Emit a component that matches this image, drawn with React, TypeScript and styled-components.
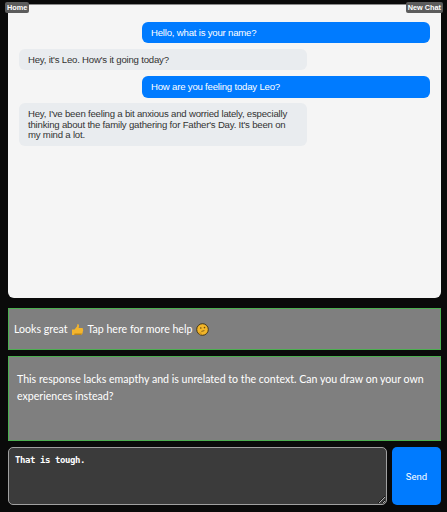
import { FC } from "react";
import styled, { createGlobalStyle } from "styled-components";

const GlobalStyle = createGlobalStyle`
  html, body {
    margin: 0;
    padding: 0;
    background: #0a0a0a;
  }
`;

const Page = styled.div`
  position: relative;
  box-sizing: border-box;
  width: 447px;
  height: 512px;
  padding: 4px 6px 7px 8px;
  display: flex;
  flex-direction: column;
  overflow: hidden;
`;

const NavButton = styled.button<{ $side: "left" | "right" }>`
  position: absolute;
  top: 2px;
  ${({ $side }) => ($side === "left" ? "left: 5px;" : "right: 4px;")}
  height: 11px;
  padding: 0 2px;
  border: 0;
  border-radius: 2px;
  background: #5c5c5c;
  color: #fff;
  font: bold 7.3px "Liberation Sans", Arial, sans-serif;
  line-height: 11px;
`;

const ChatPanel = styled.div`
  box-sizing: border-box;
  height: 294px;
  padding: 16.7px 11px 0;
  background: #f5f5f5;
  border-top: 1px solid #8a8a8a;
  border-radius: 0 0 6px 6px;
  display: flex;
  flex-direction: column;
  gap: 5.67px;
`;

const Bubble = styled.div<{ $user?: boolean }>`
  box-sizing: border-box;
  width: 288px;
  padding: 6px 9px 5px;
  border-radius: 6px;
  align-self: ${({ $user }) => ($user ? "flex-end" : "flex-start")};
  background: ${({ $user }) => ($user ? "#007bff" : "#e9ecef")};
  color: ${({ $user }) => ($user ? "#fff" : "#333")};
  font: 9.6px/10.5px "Liberation Sans", Arial, sans-serif;
  letter-spacing: -0.2px;
`;

const Notice = styled.div<{ $tall?: boolean }>`
  box-sizing: border-box;
  height: ${({ $tall }) => ($tall ? "85px" : "42px")};
  margin-top: ${({ $tall }) => ($tall ? "6px" : "10px")};
  padding: ${({ $tall }) => ($tall ? "14px 8px 0" : "0 5px")};
  display: ${({ $tall }) => ($tall ? "block" : "flex")};
  align-items: center;
  gap: 3.5px;
  background: #7f7f7f;
  border: 1px solid #4caf50;
  color: #fff;
  font: 10.6px/16.5px "Lato", "Noto Sans", sans-serif;
`;

const Composer = styled.div`
  margin-top: 6px;
  height: 58px;
  display: flex;
  gap: 5px;
`;

const Input = styled.textarea`
  box-sizing: border-box;
  flex: 1;
  min-width: 0;
  height: 58px;
  padding: 6px 6px;
  background: #3b3b3b;
  border: 1px solid #a0a0a0;
  border-radius: 5px;
  color: #fff;
  font: 600 9px/13px "DejaVu Sans Mono", monospace;
  letter-spacing: -0.42px;
  outline: none;
`;

const SendButton = styled.button`
  width: 49px;
  height: 58px;
  border: 0;
  border-radius: 5px;
  background: #007bff;
  color: #fff;
  font: 400 9.5px "Roboto", sans-serif;
`;

const ThumbsUp: FC = () => (
  <svg width="13" height="13" viewBox="0 0 13 13">
    <path
      d="M1 6.5h2.5V12H1zM3.5 6.5 6 3.5 6.5 1c1.3 0 1.8 1.2 1.4 2.6L7.6 5H11c1 0 1.3 1 .9 1.6.5.5.4 1.3-.1 1.7.3.6.1 1.3-.4 1.6.2.8-.2 1.6-1.2 1.6H6c-1 0-1.6-.4-2.5-.6z"
      fill="#f3b52c"
    />
    <path d="M3.5 12H10l1-1.6H3.5z" fill="#b9851c" />
  </svg>
);

const ThinkingFace: FC = () => (
  <svg width="13" height="13" viewBox="0 0 13 13">
    <circle cx="6.5" cy="6.5" r="5.8" fill="#f2b62a" stroke="#3a2c10" strokeWidth="0.9" />
    <circle cx="4.8" cy="5" r="0.8" fill="#6b4a10" />
    <circle cx="8.5" cy="4.6" r="0.8" fill="#6b4a10" />
    <path d="M5.4 8.4 8.4 7.6" fill="none" stroke="#6b4a10" strokeWidth="0.8" />
    <path d="M2.8 9.6c1-.6 2-.5 3 .2L5 11.6H3.5z" fill="#d99a1e" />
  </svg>
);

const App: FC = () => {
  return (
    <Page>
      <GlobalStyle />
      <NavButton $side="left">Home</NavButton>
      <NavButton $side="right">New Chat</NavButton>
      <ChatPanel>
        <Bubble $user>Hello, what is your name?</Bubble>
        <Bubble>Hey, it's Leo. How's it going today?</Bubble>
        <Bubble $user>How are you feeling today Leo?</Bubble>
        <Bubble>
          Hey, I've been feeling a bit anxious and worried lately, especially thinking about the
          family gathering for Father's Day. It's been on my mind a lot.
        </Bubble>
      </ChatPanel>
      <Notice>
        Looks great <ThumbsUp /> Tap here for more help <ThinkingFace />
      </Notice>
      <Notice $tall>
        This response lacks emapthy and is unrelated to the context. Can you draw on your own
        experiences instead?
      </Notice>
      <Composer>
        <Input defaultValue="That is tough." />
        <SendButton>Send</SendButton>
      </Composer>
    </Page>
  );
};

export default App;
